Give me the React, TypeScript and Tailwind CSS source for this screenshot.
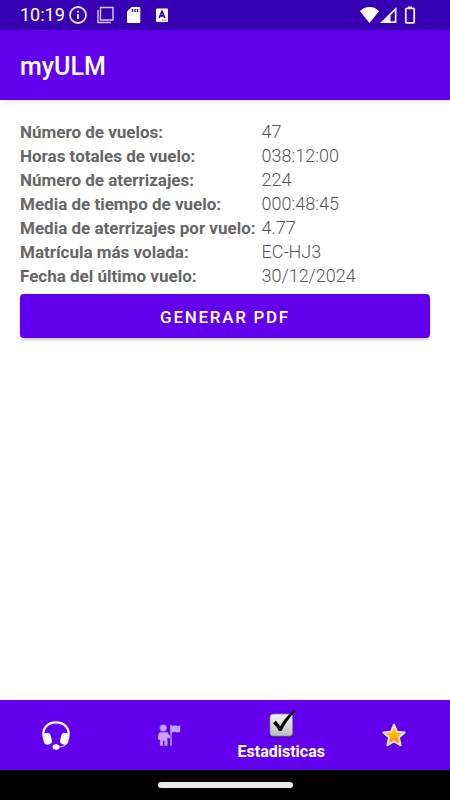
import React from 'react';

interface Stat {
  label: string;
  value: string;
}

interface NavItem {
  id: string;
  label: string;
  icon: React.ReactNode;
}

const stats: Stat[] = [
  { label: 'Número de vuelos:', value: '47' },
  { label: 'Horas totales de vuelo:', value: '038:12:00' },
  { label: 'Número de aterrizajes:', value: '224' },
  { label: 'Media de tiempo de vuelo:', value: '000:48:45' },
  { label: 'Media de aterrizajes por vuelo:', value: '4.77' },
  { label: 'Matrícula más volada:', value: 'EC-HJ3' },
  { label: 'Fecha del último vuelo:', value: '30/12/2024' },
];

function StatusBar() {
  return (
    <div className="flex h-[30px] items-center justify-between bg-[#3700b3] pl-5 pr-[34px] text-white">
      <div className="flex items-center">
        <span className="w-12 text-lg leading-[30px]">10:19</span>
        {/* Info */}
        <svg className="h-5 w-5" viewBox="0 0 20 20" fill="none" stroke="#e6dff5">
          <circle cx="10" cy="10" r="8" strokeWidth="1.8" />
          <path d="M10 9v5M10 5.8v1.8" strokeWidth="2" />
        </svg>
        {/* Stacked windows */}
        <svg className="ml-2 h-5 w-5" viewBox="0 0 20 20" fill="none" stroke="#d5caef" strokeWidth="1.4">
          <path d="M4.5 2.5H17V15H4.500z" />
          <path d="M2 5v12.500h13" />
        </svg>
        {/* SD card */}
        <svg className="ml-2 h-5 w-5" viewBox="0 0 20 20">
          <path d="M7.5 2H15a1.3 1.3 0 0 1 1.3 1.3v13.4A1.3 1.3 0 0 1 15 18H4.3a1.3 1.3 0 0 1-1.3-1.3V6.5z" fill="#fff" />
          <path d="M8.5 4v3M11 4v3M13.5 4v3" stroke="#3700b3" strokeWidth="1.4" />
        </svg>
        {/* Keyboard */}
        <svg className="ml-2 h-5 w-5" viewBox="0 0 20 20">
          <rect x="4" y="3.5" width="12" height="13.5" rx="0.8" fill="#fff" />
          <path d="M7.2 13 10 6.5l2.8 6.5M8.2 10.8h3.600" fill="none" stroke="#3700b3" strokeWidth="1.7" />
          <path d="M10 15.2h5" stroke="#3700b3" strokeWidth="0.8" strokeDasharray="1 0.6" />
        </svg>
      </div>
      <div className="flex items-center">
        {/* Wifi */}
        <svg className="h-5 w-5" viewBox="0 0 20 20">
          <path d="M9.5 18 0 6.300C2.500 3.500 5.500 2 9.500 2s7 1.500 9.500 4.300z" fill="#fff" />
        </svg>
        {/* Mobile signal */}
        <svg className="h-5 w-5" viewBox="0 0 20 20">
          <path d="M0 18 16.500 2v16z" fill="#f3effa" />
          <path d="M10.500 10.300 14.800 6v10.300h-4.300z" fill="#3700b3" />
        </svg>
        {/* Battery */}
        <svg className="ml-1 h-5 w-3" viewBox="0 0 12 20">
          <path d="M4 1.500h4v2H4z" fill="#fff" />
          <rect x="1.8" y="3.4" width="8.4" height="14.5" rx="0.8" fill="none" stroke="#f3effa" strokeWidth="1.8" />
        </svg>
      </div>
    </div>
  );
}

function HeadsetIcon() {
  return (
    <svg className="h-8 w-8" viewBox="0 0 32 32">
      <path d="M4 18C1.300 9.500 8 3.400 16 3.400S30.700 9.500 28 18" fill="none" stroke="#fff" strokeWidth="2.2" />
      <path d="M27 22c-.8 4-4 6.200-9 6" fill="none" stroke="#e6d8ff" strokeWidth="1.2" />
      <rect x="3.2" y="14" width="8.2" height="11.5" rx="3.4" transform="rotate(-14 7.3 19.7)" fill="#fff" />
      <rect x="20.600" y="14" width="8.2" height="11.5" rx="3.4" transform="rotate(14 24.700 19.7)" fill="#fff" />
      <ellipse cx="16" cy="28" rx="3.5" ry="2.8" fill="#fff" />
    </svg>
  );
}

function GuideIcon() {
  return (
    <svg className="h-8 w-8" viewBox="0 0 32 32" fill="#c9a0ff" stroke="#4a10b8" strokeWidth="0.5">
      <path d="M17 5.500h2v1.200l3-.7 2.500.7 3-.7v7l-3 .7-2.500-.7-3 .7V27h-2z" />
      <path d="M6.500 13h8.200l2 3.200 1.300-.2v3l-2.700.5-.6-.8V27h-3.500v-5h-1V27H6.800v-6H4.800v-5z" />
      <circle cx="10.300" cy="9" r="3.700" />
    </svg>
  );
}

function ChecklistIcon() {
  return (
    <svg className="h-8 w-8" viewBox="0 0 32 32">
      <defs>
        <linearGradient id="box" x1="0" y1="0" x2="0" y2="1">
          <stop offset="0" stopColor="#f4f4f4" />
          <stop offset="1" stopColor="#bcbcbc" />
        </linearGradient>
      </defs>
      <rect x="4.500" y="7" width="23.500" height="22.500" rx="3.500" fill="#351077" opacity="0.7" />
      <rect x="5" y="6" width="22.500" height="22" rx="3" fill="url(#box)" stroke="#858585" strokeWidth="0.8" />
      <path d="M8 15.500l2.800-2.800 4.500 5.500C19.500 11 23.500 6 29.500 2l1 1.300C25.500 8.500 21 14 16.500 23h-2.700C12.300 19.500 10.700 17.500 8 15.500z" fill="#050505" />
    </svg>
  );
}

function StarIcon() {
  return (
    <svg className="h-8 w-8" viewBox="0 0 32 32">
      <defs>
        <linearGradient id="star" x1="0" y1="0" x2="0" y2="1">
          <stop offset="0" stopColor="#ffd21a" />
          <stop offset="0.5" stopColor="#ffb800" />
          <stop offset="1" stopColor="#ff7a00" />
        </linearGradient>
      </defs>
      <path d="M16 6l3 7.300 8 .7-6 5.300 1.900 7.900L16 23.200l-6.900 4L11 19.300 5 14l8-.7z" fill="none" stroke="#381076" strokeWidth="2.400" opacity="0.7" />
      <path d="M16 5.500l3 7.200 7.800.7-5.900 5.200 1.800 7.700-6.700-4-6.700 4 1.800-7.700-5.900-5.200 7.800-.7z" fill="url(#star)" stroke="#e2dddd" strokeWidth="2" strokeLinejoin="round" />
    </svg>
  );
}

const navItems: NavItem[] = [
  { id: 'support', label: 'Soporte', icon: <HeadsetIcon /> },
  { id: 'guide', label: 'Guía', icon: <GuideIcon /> },
  { id: 'stats', label: 'Estadisticas', icon: <ChecklistIcon /> },
  { id: 'favorites', label: 'Favoritos', icon: <StarIcon /> },
];

export default function App() {
  const active = 'stats';

  return (
    <div className="flex min-h-screen flex-col bg-white font-[Roboto,sans-serif]">
      <StatusBar />

      <header className="flex h-[70px] items-center bg-[#6200ee] px-5 pt-1 shadow-[0_1px_6px_rgba(0,0,0,0.12)]">
        <h1 className="text-[25px] font-medium leading-8 text-white">myULM</h1>
      </header>

      <main className="flex-1 px-5 pt-5">
        <table className="border-collapse text-left leading-6 text-[#666666]">
          <tbody>
            {stats.map(stat => (
              <tr key={stat.label}>
                <th scope="row" className="p-0 pr-1.5 text-[17px] font-bold leading-6">{stat.label}</th>
                <td className="p-0 text-lg font-light leading-6 text-[#555555]">{stat.value}</td>
              </tr>
            ))}
          </tbody>
        </table>

        <button
          type="button"
          className="mt-[6px] h-11 w-full rounded bg-[#6200ee] pt-1 text-[17px] font-medium tracking-widest text-white shadow-[0_2px_3px_rgba(0,0,0,0.2)]"
        >
          GENERAR PDF
        </button>
      </main>

      <nav className="grid h-[70px] grid-cols-4 bg-[#6200ee] shadow-[0_-1px_8px_rgba(0,0,0,0.06)]">
        {navItems.map(item => (
          <button
            key={item.id}
            type="button"
            aria-label={item.label}
            className="flex flex-col items-center justify-center gap-0.5 text-white"
          >
            {item.icon}
            {item.id === active && (
              <span className="text-base font-bold leading-5">{item.label}</span>
            )}
          </button>
        ))}
      </nav>

      {/* Gesture bar */}
      <div className="flex h-[30px] items-center justify-center bg-black">
        <div className="h-[6px] w-[30%] rounded-full bg-[#ebebeb]" />
      </div>
    </div>
  );
}
